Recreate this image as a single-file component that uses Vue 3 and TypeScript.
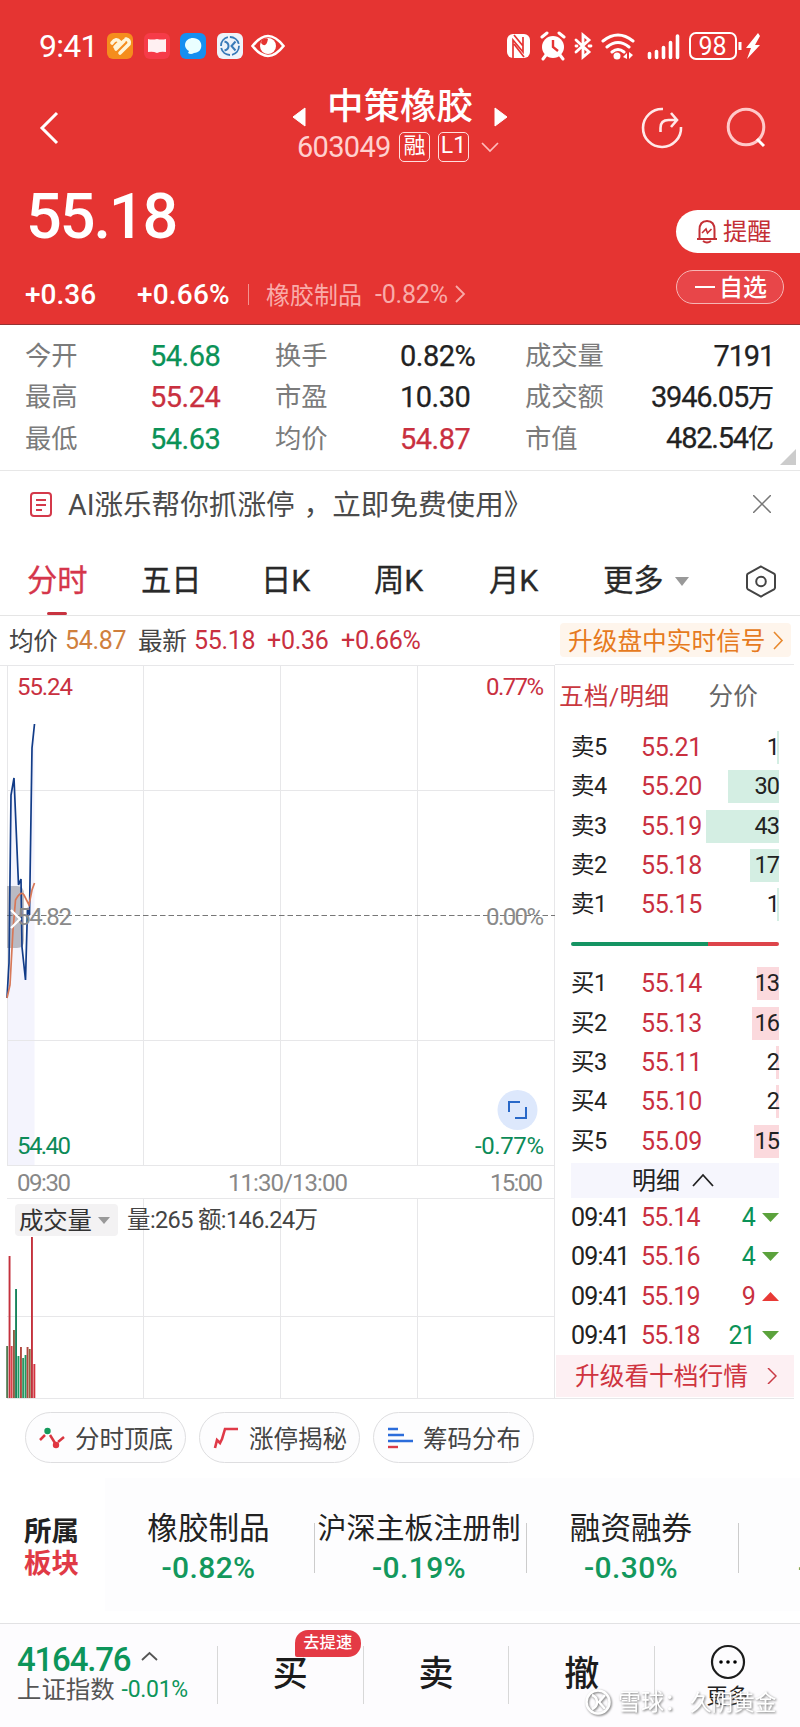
<script setup lang="ts">
interface Level { name: string; price: string; qty: number }
interface Tick { price: string; qty: number; up: boolean }

const stats = [
  { label: '今开', value: '54.68', tone: 'down' },
  { label: '换手', value: '0.82%', tone: '' },
  { label: '成交量', value: '7191', tone: '', unit: '' },
  { label: '最高', value: '55.24', tone: 'up' },
  { label: '市盈', value: '10.30', tone: '' },
  { label: '成交额', value: '3946.05', tone: '', unit: '万' },
  { label: '最低', value: '54.63', tone: 'down' },
  { label: '均价', value: '54.87', tone: 'up' },
  { label: '市值', value: '482.54', tone: '', unit: '亿' },
]
const tabs = ['分时', '五日', '日K', '周K', '月K']

const asks: Level[] = [
  { name: '卖5', price: '55.21', qty: 1 },
  { name: '卖4', price: '55.20', qty: 30 },
  { name: '卖3', price: '55.19', qty: 43 },
  { name: '卖2', price: '55.18', qty: 17 },
  { name: '卖1', price: '55.15', qty: 1 },
]
const bids: Level[] = [
  { name: '买1', price: '55.14', qty: 13 },
  { name: '买2', price: '55.13', qty: 16 },
  { name: '买3', price: '55.11', qty: 2 },
  { name: '买4', price: '55.10', qty: 2 },
  { name: '买5', price: '55.09', qty: 15 },
]
const ticks: Tick[] = [
  { price: '55.14', qty: 4, up: false },
  { price: '55.16', qty: 4, up: false },
  { price: '55.19', qty: 9, up: true },
  { price: '55.18', qty: 21, up: false },
]
const depthWidth = (q: number) => `${Math.max(2, q * 1.7)}px`

const volumes: [number, number, string][] = [
  [6.2, 1346, '#4f7a52'], [8.6, 1256, '#c4313c'], [10.7, 1346, '#d9404a'], [13, 1330, '#8a5f42'],
  [15.1, 1289, '#17845c'], [17.5, 1356, '#1d9a63'], [20, 1347, '#b0483f'], [22.2, 1358, '#2a9560'],
  [24.6, 1355, '#1d9a63'], [26.6, 1347, '#b0483f'], [28.8, 1349, '#86693f'], [31, 1237, '#c4313c'],
  [33.4, 1364, '#d2333e'],
]
const sectors = [
  { name: '橡胶制品', change: '-0.82%' },
  { name: '沪深主板注册制', change: '-0.19%' },
  { name: '融资融券', change: '-0.30%' },
]
</script>

<template>
  <main class="screen">
    <header class="head">
      <div class="status">
        <span class="clock">9:41</span>
        <svg class="apps" width="178" height="28" viewBox="0 0 178 28" fill="none">
          <rect x="0" y="1" width="26" height="26" rx="6" fill="#f58d1d" />
          <path d="M5 11q4-6 8-1l-5 5M9 17l8-8M13 21l9-9q1-4-3-5" stroke="#fff5d8" stroke-width="3.600" stroke-linecap="round" />
          <rect x="37" y="1" width="26" height="26" rx="6" fill="#f63b48" />
          <path d="M41 7q4 1 9-0q5 1 9 0v13q-5-1-9 1q-4-2-9-1z" fill="#fff0f2" />
          <rect x="73" y="1" width="26" height="26" rx="6" fill="#168ff0" />
          <path d="M86 6c11 0 11 15 1 15q-3 2-6 0l1-2c-7-4-4-13 4-13z" fill="#eaffff" />
          <rect x="110" y="1" width="26" height="26" rx="6" fill="#eef3fa" />
          <circle cx="123" cy="14" r="9" stroke="#397ab8" stroke-width="1.800" stroke-dasharray="12 2" />
          <path d="M117.500 9.500q4 1 4 4.500t-4 4.500M128.500 9.500l-4 4.500 4 4.500" stroke="#397ab8" stroke-width="2" />
          <path d="M145.500 14q15.500-20 31 0q-15.500 20-31 0z" stroke="#fff" stroke-width="2.600" />
          <circle cx="161" cy="14" r="8" fill="#fff" />
          <path d="M154 11q5 6 7-4q-2-2-6 1z" fill="#e53432" />
        </svg>
        <svg class="system" width="256" height="30" viewBox="0 0 256 30" fill="none">
          <rect x="1" y="3" width="23" height="24" rx="6" fill="#fff" />
          <path d="M7 27V9l10 12V6M8 4l9 11M8 13l10 13" stroke="#e53432" stroke-width="1.700" />
          <circle cx="47" cy="16" r="11" fill="#fff" />
          <path d="M36 6l5-4M53 2l5 4M40 24l-3 4M54 24l3 4" stroke="#fff" stroke-width="3" stroke-linecap="round" />
          <path d="M47 9v7l5 4" stroke="#e53432" stroke-width="2.400" />
          <path d="M70 9l13 12-6 5V4l6 5-13 12M70 15h1m12 0h2" stroke="#fff" stroke-width="2.800" stroke-linecap="round" />
          <path d="M97 10q15-12 30 0M101 16q11-9 22 0M106 21q6-5 12 0" stroke="#fff" stroke-width="3" stroke-linecap="round" />
          <circle cx="111" cy="25" r="3.500" fill="#fff" />
          <path d="M117 26l4-4v6zM123 21v7l4-4z" fill="#fff" />
          <path d="M143.500 22.500v4M150.500 20.500v6M157.500 16.500v10M164.500 11.500v15M171.500 5v21.500" stroke="#fff" stroke-width="3.600" stroke-linecap="round" />
          <rect x="184" y="2" width="46" height="26" rx="6" stroke="#fff" stroke-width="2" />
          <path d="M234 11v8" stroke="#fff" stroke-width="3" />
          <path d="M252 2l-12 15h5l-4 11 13-14h-5l5-9z" fill="#fff" />
          <text x="206.500" y="23.500" text-anchor="middle" class="battery">98</text>
        </svg>
      </div>

      <div class="nav">
        <svg class="back" width="22" height="36" viewBox="0 0 22 36"><path d="M19 3L4 18l15 15" fill="none" stroke="#fff" stroke-width="3" /></svg>
        <div class="title">
          <div class="name">
            <svg width="14" height="20" viewBox="0 0 14 20"><path d="M13 1v18L1 10z" fill="#fff" stroke="#fff" stroke-linejoin="round" /></svg>
            <h1>中策橡胶</h1>
            <svg width="14" height="20" viewBox="0 0 14 20"><path d="M1 1v18l12-9z" fill="#fff" stroke="#fff" stroke-linejoin="round" /></svg>
          </div>
          <div class="code">
            <span class="num">603049</span><span class="tag">融</span><span class="tag latin">L1</span>
            <svg width="18" height="11" viewBox="0 0 18 11"><path d="M1 1l8 8 8-8" fill="none" stroke="#fbb" stroke-width="1.700" /></svg>
          </div>
        </div>
        <svg class="share" width="42" height="42" viewBox="0 0 42 42" fill="none" stroke="#ffe9e9" stroke-width="2.600">
          <path d="M22 2A19 19 0 1 0 40 20" /><path d="M19.500 25v-4q0-8 8-8h8M30 6l6 7-6 7" />
        </svg>
        <svg class="search" width="42" height="42" viewBox="0 0 42 42" fill="none" stroke="#ffc9c9" stroke-width="3">
          <circle cx="20" cy="20" r="17.800" /><path d="M31 32l7 7" stroke="#fff" />
        </svg>
      </div>

      <div class="quote">
        <strong class="price">55.18</strong>
        <button class="alert">
          <svg width="24" height="25" viewBox="0 0 24 25" fill="none" stroke="#c42f35" stroke-width="2">
            <path d="M2 20h20M4.500 20v-9q0-9 7.500-9t7.500 9v9M8 22q4 3 8 0" /><path d="M7 14l4-4 1.500 4 4-4" stroke-width="1.600" />
          </svg>
          <span>提醒</span>
        </button>
      </div>
      <div class="change">
        <span class="delta">+0.36</span><span class="percent">+0.66%</span><i></i>
        <span class="board">橡胶制品</span><span class="board-change">-0.82%</span>
        <svg width="12" height="18" viewBox="0 0 12 18"><path d="M2 1l8 8-8 8" fill="none" stroke="#f8aaa8" stroke-width="1.800" /></svg>
        <button class="watch"><b></b><span>自选</span></button>
      </div>
    </header>

    <section class="stats">
      <template v-for="s in stats" :key="s.label">
        <span class="label">{{ s.label }}</span>
        <span class="value" :class="[s.tone, { wide: s.unit !== undefined }]">{{ s.value }}<em v-if="s.unit">{{ s.unit }}</em></span>
      </template>
      <svg class="corner" width="16" height="16" viewBox="0 0 16 16"><path d="M16 0v16H0z" fill="#ccc" /></svg>
    </section>

    <section class="banner">
      <svg width="22" height="25" viewBox="0 0 22 25" fill="none" stroke="#d4394a" stroke-width="2">
        <rect x="1" y="1" width="20" height="23" rx="3" /><path d="M6 8h10M6 13h10M6 18h6" />
      </svg>
      <p>AI涨乐帮你抓涨停<span class="comma">，</span>立即免费使用》</p>
      <svg class="close" width="18" height="18" viewBox="0 0 18 18"><path d="M0 0l18 18M18 0L0 18" stroke="#777" stroke-width="1.500" /></svg>
    </section>

    <nav class="tabs">
      <span v-for="(t, i) in tabs" :key="t" :class="['tab', { active: i === 0 }]">{{ t }}</span>
      <span class="tab more">更多<svg width="14" height="9" viewBox="0 0 14 9"><path d="M0 0h14L7 9z" fill="#999" /></svg></span>
      <svg class="gear" width="32" height="33" viewBox="0 0 32 33" fill="none" stroke="#444" stroke-width="2">
        <path d="M16 1.500l13 7.200q1 .6 1 1.800v12q0 1.200-1 1.800L16 31.500 3 24.300q-1-.6-1-1.800v-12q0-1.200 1-1.800z" /><circle cx="16" cy="16.500" r="4.800" />
      </svg>
    </nav>

    <section class="summary">
      <span class="cn">均价</span><span class="avg">54.87</span>
      <span class="cn latest">最新</span><span class="up s1">55.18</span><span class="up s2">+0.36</span><span class="up s3">+0.66%</span>
      <a class="signal"><span>升级盘中实时信号</span><svg width="11" height="19" viewBox="0 0 11 19"><path d="M1 1l8 8.500L1 18" fill="none" stroke="#e8892e" stroke-width="1.600" /></svg></a>
    </section>

    <section class="market">
      <svg class="chart" width="555" height="735" viewBox="0 664 555 735">
        <path d="M7 998L9 963 11 795 14 778 18.500 885 21 879 22 947 25.500 980 27.500 908 29.500 915 32 748 34.500 724V1165H7z" fill="#f4f4fd" />
        <g stroke="#e7e7e9" fill="none">
          <path d="M7.500 665V1165M143.500 665V1165M280.500 665V1165M417.500 665V1165M554.500 665V1398" />
          <path d="M0 665.500H555M7 790.500H555M7 1040.500H555M7 1165.500H555M7 1198.500H555M7 1316.500H555M7 1398.500H555M143.500 1199V1398M280.500 1199V1398M417.500 1199V1398" />
        </g>
        <rect v-for="v in volumes" :key="v[0]" :x="v[0]" :y="v[1]" width="1.900" :height="1398 - v[1]" :fill="v[2]" />
        <path d="M7 886h10q7 0 7 8v46q0 8-7 8H7z" fill="#8b8b94" opacity=".55" />
        <path d="M7 915.500H555" stroke="#777" stroke-width="1.200" stroke-dasharray="5.500 3" />
        <path d="M7 998L9 963 11 795 14 778 18.500 885 21 879 22 947 25.500 980 27.500 908 29.500 915 32 748 34.500 724" fill="none" stroke="#123c88" stroke-width="1.700" />
        <path d="M7 998L10 985 13 930 15.500 900Q21 890 24 895L29 905 32 890 34.500 883" fill="none" stroke="#d77858" stroke-width="1.700" />
        <g class="axis">
          <text x="17" y="695" textLength="56" fill="#c9303f">55.24</text>
          <text x="486" y="695" textLength="58" fill="#c9303f">0.77%</text>
          <text x="17" y="925" textLength="55" fill="#8a8a8a">54.82</text>
          <text x="486" y="925" textLength="58" fill="#8a8a8a">0.00%</text>
          <text x="17" y="1154" textLength="54" fill="#0c8b58">54.40</text>
          <text x="475" y="1154" textLength="69" fill="#0c8b58">-0.77%</text>
          <text x="17" y="1191" textLength="54" fill="#888">09:30</text>
          <text x="228" y="1191" textLength="120" fill="#888">11:30/13:00</text>
          <text x="490" y="1191" textLength="53" fill="#888">15:00</text>
        </g>
        <path d="M11 910l9 9-9 9" fill="none" stroke="#fff" stroke-width="2.200" />
        <circle cx="517.500" cy="1110" r="20" fill="#dde8fc" />
        <path d="M509 1112v-10h11M526 1107v11h-11" fill="none" stroke="#2868c8" stroke-width="2" />
        <rect x="15" y="1204" width="103" height="32" rx="4" fill="#f3f2f3" />
        <text x="19" y="1229" class="volume" textLength="73">成交量</text>
        <path d="M98 1217h12l-6 7z" fill="#999" />
        <text x="127" y="1228" class="turnover" textLength="191">量:265 额:146.24万</text>
      </svg>

      <aside class="book">
        <div class="book-tabs"><span class="on">五档/明细</span><span>分价</span></div>
        <div v-for="l in asks" :key="l.name" class="level ask">
          <span>{{ l.name }}</span><span class="up">{{ l.price }}</span>
          <span class="qty"><i :style="{ width: depthWidth(l.qty) }"></i><b>{{ l.qty }}</b></span>
        </div>
        <div class="ratio"><i></i></div>
        <div v-for="l in bids" :key="l.name" class="level bid">
          <span>{{ l.name }}</span><span class="up">{{ l.price }}</span>
          <span class="qty"><i :style="{ width: depthWidth(l.qty) }"></i><b>{{ l.qty }}</b></span>
        </div>
        <div class="fold"><span>明细</span><svg width="22" height="14" viewBox="0 0 22 14"><path d="M1 13L11 2l10 11" fill="none" stroke="#222" stroke-width="1.800" /></svg></div>
        <div v-for="t in ticks" :key="t.price" class="tick">
          <span>09:41</span><span class="up">{{ t.price }}</span>
          <span :class="['amount', t.up ? 'up' : 'down']">{{ t.qty }}</span>
          <svg width="17" height="9" viewBox="0 0 17 9"><path :d="t.up ? 'M0 9h17L8.500 0z' : 'M0 0h17L8.500 9z'" :fill="t.up ? '#e83a36' : '#5ba23c'" /></svg>
        </div>
        <a class="upgrade"><span>升级看十档行情</span><svg width="10" height="16" viewBox="0 0 10 16"><path d="M1 0l8 8-8 8" fill="none" stroke="#c93a44" stroke-width="1.500" /></svg></a>
      </aside>
    </section>

    <section class="tools">
      <button>
        <svg width="26" height="22" viewBox="0 0 26 22" fill="none" stroke="#d93640" stroke-width="2.500"><path d="M1 13l5-5M11 8l5 8M19 15l6-5" /><circle cx="8.500" cy="4" r="3.200" fill="#149a5c" stroke="none" /><circle cx="17" cy="18" r="3.200" fill="#e13640" stroke="none" /></svg>
        <span>分时顶底</span>
      </button>
      <button>
        <svg width="26" height="22" viewBox="0 0 26 22"><path d="M2 21l2-8 3 3 2-4 3-10h13" fill="none" stroke="#e03a48" stroke-width="2.600" /></svg>
        <span>涨停揭秘</span>
      </button>
      <button>
        <svg width="26" height="22" viewBox="0 0 26 22" stroke="#2c6ddb" stroke-width="2.400"><path d="M1 2h10M1 8h16M1 14h25" /><path d="M1 20h10" stroke="#dc3c48" /></svg>
        <span>筹码分布</span>
      </button>
    </section>

    <section class="sectors">
      <div class="heading"><span>所属</span><span class="red">板块</span></div>
      <div class="strip">
        <div v-for="s in sectors" :key="s.name" class="sector">
          <span :class="{ long: s.name.length > 4 }">{{ s.name }}</span><strong>{{ s.change }}</strong>
        </div>
        <div class="sector next"><strong>-</strong></div>
      </div>
    </section>

    <footer class="bar">
      <div class="index">
        <div class="points">4164.76<svg width="17" height="10" viewBox="0 0 17 10"><path d="M1 9l7.500-7L16 9" fill="none" stroke="#555" stroke-width="1.800" /></svg></div>
        <div class="index-name">上证指数<span>-0.01%</span></div>
      </div>
      <div class="action">买<span class="badge">去提速</span></div>
      <div class="action">卖</div>
      <div class="action">撤</div>
      <div class="others">
        <svg width="36" height="36" viewBox="0 0 36 36"><circle cx="18" cy="18" r="16" fill="none" stroke="#1c1c1c" stroke-width="2.200" /><circle cx="11" cy="18" r="1.800" /><circle cx="18" cy="18" r="1.800" /><circle cx="25" cy="18" r="1.800" /></svg>
        <span>更多</span>
      </div>
      <div class="mark">
        <svg width="28" height="28" viewBox="0 0 28 28" fill="none" stroke="#fff" stroke-width="2.500"><circle cx="13" cy="13" r="11.500" /><path d="M7 6q5 2 5 7t-5 7M20 6l-6 7 6 7" /></svg>
        <span>雪球：</span><span class="author">久阴黄金</span>
      </div>
    </footer>
  </main>
</template>

<style>
body { margin: 0; background: #fff; }
</style>

<style scoped>
.screen { width: 800px; height: 1727px; overflow: hidden; background: #fff; color: #222; font-family: Roboto, "Noto Sans CJK SC", sans-serif; }
.screen * { box-sizing: border-box; }
svg { display: block; flex: none; }
button { border: 0; padding: 0; font-family: inherit; }
.up { color: #c9303f; }
.down { color: #0b9257; }

.head { height: 325px; background: #e53432; color: #fff; border-bottom: 1px solid #943333; }
.status { height: 76px; padding: 16px 38px 0 39px; display: flex; align-items: center; }
.clock { width: 68px; font-size: 32px; letter-spacing: -.7px; }
.system { margin-left: auto; }
.battery { font: 400 25px Roboto, sans-serif; fill: #fff; }
.nav { height: 100px; display: flex; align-items: flex-start; padding-left: 38px; }
.back { margin-top: 34px; }
.title { width: 220px; margin-left: 229px; }
.name { display: flex; align-items: center; height: 55px; padding: 2px 0 0 3px; }
.name svg { margin-top: 25px; }
.name h1 { margin: 4px 21px 0 21px; width: 146px; font-size: 36.500px; font-weight: 500; line-height: 55px; white-space: nowrap; }
.code { height: 32px; display: flex; align-items: center; padding-left: 8px; }
.code .num { width: 102px; font-size: 29px; letter-spacing: -.7px; color: #ffd0cf; }
.tag { width: 31px; height: 30px; line-height: 26px; border: 1.500px solid #ffdede; border-radius: 5px; font-size: 22px; text-align: center; margin-right: 8px; }
.latin { font-size: 23px; margin-right: 12px; }
.share { margin: 31px 0 0 132px; }
.search { margin: 31px 0 0 43px; }
.quote { height: 78px; display: flex; justify-content: space-between; align-items: center; padding-left: 26px; }
.price { font-size: 63px; font-weight: 500; letter-spacing: -2.100px; line-height: 78px; margin-top: 3px; }
.alert { width: 124px; height: 43px; margin-top: 33px; border-radius: 22px 0 0 22px; background: #fff; color: #c42f35; font-size: 24.300px; display: flex; align-items: center; gap: 4px; padding-left: 19px; }
.alert span { margin-top: -4px; }
.change { height: 70px; padding: 10px 16px 0 25px; display: flex; align-items: center; }
.delta { width: 112px; font-size: 28px; font-weight: 500; }
.percent { width: 110px; font-size: 28px; font-weight: 500; letter-spacing: .2px; }
.change i { width: 1px; height: 21px; background: #f39390; margin: 0 17px 0 1px; }
.board { width: 109px; margin-top: -2px; color: #f9aba9; font-size: 24px; }
.board-change { width: 79px; color: #f9aba9; font-size: 25px; letter-spacing: -.2px; }
.watch { width: 108px; height: 34px; margin: -14px 0 0 auto; border: 1.500px solid #f6b5b4; border-radius: 17px; background: #e84649; color: #fff; font-size: 24px; font-weight: 500; display: flex; align-items: center; gap: 4px; padding-left: 18px; }
.watch b { width: 20px; height: 2px; background: #fff; }
.watch span { margin-top: -3px; }

.stats { position: relative; height: 146px; padding: 10px 26px 0 25px; display: grid; grid-template-columns: 125px 125px 125px 125px 100px 149px; grid-template-rows: repeat(3, 41.500px); align-items: center; border-bottom: 1px solid #e7e7e7; line-height: 40px; }
.label { font-size: 26.300px; color: #7b7b7b; white-space: nowrap; }
.value { font-size: 29px; letter-spacing: -.5px; white-space: nowrap; -webkit-text-stroke: .25px; }
.wide { text-align: right; letter-spacing: -1.200px; }
.value em { font-style: normal; font-size: 26px; letter-spacing: 0; }
.corner { position: absolute; right: 4px; bottom: 5px; }

.banner { height: 66px; display: flex; align-items: center; padding: 0 29px 0 30px; color: #4b4b4b; }
.banner p { margin: -4px 0 0 16px; font-size: 28.600px; white-space: nowrap; }
.comma { padding: 0 0 0 9px; }
.close { margin-left: auto; }

.tabs { height: 79px; padding: 10px 23px 0 27px; display: flex; align-items: center; border-bottom: 1px solid #e5e5e5; font-size: 30.300px; color: #292929; }
.tab { position: relative; line-height: 68px; width: 114px; -webkit-text-stroke: .3px; }
.tab:nth-child(2) { width: 120px; }
.tab:nth-child(3) { width: 113px; }
.tab:nth-child(4) { width: 115px; }
.tab.active { color: #d5364b; }
.tab.active::after { content: ""; position: absolute; left: 20px; bottom: 0; width: 20px; height: 3px; border-radius: 2px; background: #c83340; }
.tab.more { display: flex; align-items: center; gap: 11px; width: 100px; }
.gear { margin-left: auto; }

.summary { height: 48px; display: flex; align-items: center; padding: 0 9px 0 9px; font-size: 25px; letter-spacing: -.3px; }
.summary > span { flex: none; }
.summary > .cn { width: 56px; margin-top: -3px; font-size: 24.600px; color: #444; }
.avg { width: 73px; color: #d0803e; }
.s1 { width: 73px; }
.s2 { width: 74px; }
.signal { margin-left: auto; width: 231px; height: 34px; border-radius: 4px; background: #fef5ec; color: #e67a20; font-size: 24.700px; letter-spacing: 0; display: flex; align-items: center; gap: 7px; padding-left: 8px; white-space: nowrap; }
.signal span { margin-top: -3px; }

.market { height: 735px; display: flex; }
.axis { font-family: Roboto, sans-serif; font-size: 24px; }
.volume { font-size: 24.400px; fill: #333; }
.turnover { font-size: 23.500px; fill: #444; }
.book { width: 239px; padding: 0 15px 0 16px; border-top: 1.500px solid #e7e7e9; border-bottom: 1px solid #e7e7e9; display: flex; flex-direction: column; font-size: 25px; }
.book-tabs { height: 63px; padding-bottom: 4px; margin-left: -12px; display: flex; align-items: center; gap: 39px; font-size: 24.600px; color: #666; white-space: nowrap; }
.book-tabs .on { color: #c9383f; letter-spacing: .4px; }
.level { height: 39.350px; display: grid; grid-template-columns: 70px 1fr 74px; align-items: center; line-height: 33px; letter-spacing: -.4px; }
.level > span:first-child { font-size: 23.500px; color: #222; }
.qty { height: 33px; position: relative; display: flex; justify-content: flex-end; text-align: right; }
.qty i { height: 33px; background: #d4eee3; }
.bid .qty i { background: #fbd9dd; }
.qty b { position: absolute; right: 0; font-size: 23.500px; font-weight: 400; letter-spacing: -1px; color: #222; }
.ratio { height: 40px; display: flex; align-items: center; }
.ratio i { width: 100%; height: 4px; border-radius: 2px; background: linear-gradient(90deg, #159463 0 66%, #dd444a 66%); }
.fold { height: 35px; margin: 2px 0 0; background: #f6f6fd; display: flex; align-items: center; justify-content: center; gap: 12px; font-size: 24px; padding-right: 4px; }
.fold span { margin-top: -4px; }
.tick { height: 39.400px; display: grid; grid-template-columns: 70px 70px 44px 24px; align-items: center; letter-spacing: -.8px; }
.amount { text-align: right; }
.tick svg { margin-left: 7px; }
.upgrade { height: 42px; margin: auto -15px 1px -15px; padding: 0 17px 0 19px; display: flex; align-items: center; justify-content: space-between; background: #fdf0f3; color: #cf3440; font-size: 24.700px; }
.upgrade span { margin-top: -4px; }

.tools { height: 79px; padding: 13px 25px; display: flex; gap: 13px; }
.tools button { width: 161px; height: 51px; border: 1px solid #dedee0; border-radius: 26px; background: #fdfdfe; color: #444; font-size: 24.500px; display: flex; align-items: center; gap: 10px; padding-left: 13px; white-space: nowrap; }
.tools span { margin-top: -1px; }

.sectors { height: 145px; display: flex; }
.heading { width: 105px; padding: 38px 0 0 24px; display: flex; flex-direction: column; font-size: 27.500px; line-height: 32px; font-weight: 700; }
.heading .red { color: #e03a46; }
.strip { width: 695px; height: 133px; background: #fdfdfe; display: flex; overflow: hidden; }
.sector { flex: none; width: 212px; display: flex; flex-direction: column; align-items: center; position: relative; padding: 29px 4px 0 0; font-size: 30.600px; line-height: 44px; white-space: nowrap; }
.sector:first-child { width: 210px; padding-right: 3px; }
.sector::after { content: ""; position: absolute; right: 0; top: 45px; width: 1.500px; height: 50px; background: #ccc; }
.sector .long { font-size: 29px; }
.sector strong { font-weight: 500; font-size: 30px; line-height: 34px; color: #13985d; letter-spacing: .4px; }
.sector.next { align-items: flex-start; padding: 73px 0 0 59px; }

.bar { position: relative; height: 105px; border-top: 1.500px solid #e2e2e4; background: #fdfcfe; display: flex; align-items: flex-start; padding-top: 22px; }
.index { width: 218px; height: 58px; border-right: 1px solid #d8d8d8; padding-left: 17px; }
.points { display: flex; gap: 11px; font-size: 33px; line-height: 28px; font-weight: 500; letter-spacing: -1.200px; color: #0d955a; }
.points svg { margin-top: 5px; }
.index-name { display: flex; align-items: center; gap: 7px; font-size: 24.400px; line-height: 32px; color: #555; white-space: nowrap; }
.index-name span { font-size: 23px; letter-spacing: -.3px; color: #0d955a; }
.action { position: relative; width: 146px; height: 58px; border-right: 1px solid #d8d8d8; text-align: center; font-size: 35px; line-height: 58px; font-weight: 500; color: #1c1c1c; }
.badge { position: absolute; left: 77px; top: -16px; width: 66px; height: 27px; border-radius: 13px 13px 13px 2px; background: #e43a45; color: #fff; font-size: 16.300px; line-height: 25px; }
.others { width: 145px; display: flex; flex-direction: column; align-items: center; margin-top: -2px; font-size: 21px; line-height: 24px; }
.others span { margin-top: 4px; }
.mark { position: absolute; left: 585px; top: 63px; display: flex; align-items: center; color: #fff; font-size: 23px; line-height: 32px; white-space: nowrap; filter: drop-shadow(1px 1px 1px #777); }
.mark span { margin-left: 5px; width: 67px; }
.mark .author { font-size: 21.600px; width: auto; }
</style>
